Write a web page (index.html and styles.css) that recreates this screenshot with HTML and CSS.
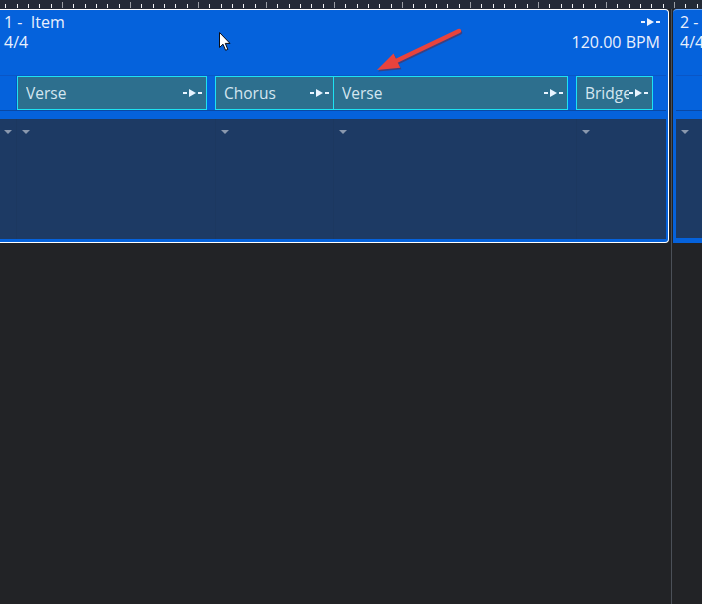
FILE: index.html
```html
<!DOCTYPE html>
<html>
<head>
<meta charset="utf-8">
<link rel="stylesheet" href="styles.css">
</head>
<body>
<div class="ruler"></div>
<div class="lane">
  <div class="item item-selected">
    <div class="head">
      <div class="row">
        <span>1 -&nbsp; Item</span>
        <svg class="play" width="19" height="8" viewBox="0 0 19 8"><rect x="0" y="3" width="4" height="2"/><polygon points="6,0 13,4 6,8"/><rect x="15" y="3" width="4" height="2"/></svg>
      </div>
      <div class="row"><span>4/4</span><span>120.00 BPM</span></div>
    </div>
    <div class="markers">
      <div class="sec s0"></div>
      <div class="sec s1"><div class="mk w190"><span class="mk-name">Verse</span><svg class="play" width="19" height="8" viewBox="0 0 19 8"><rect x="0" y="3" width="4" height="2"/><polygon points="6,0 13,4 6,8"/><rect x="15" y="3" width="4" height="2"/></svg></div></div>
      <div class="sec s2"><div class="mk w118"><span class="mk-name">Chorus</span><svg class="play" width="19" height="8" viewBox="0 0 19 8"><rect x="0" y="3" width="4" height="2"/><polygon points="6,0 13,4 6,8"/><rect x="15" y="3" width="4" height="2"/></svg></div></div>
      <div class="sec s3"><div class="mk w235"><span class="mk-name">Verse</span><svg class="play" width="19" height="8" viewBox="0 0 19 8"><rect x="0" y="3" width="4" height="2"/><polygon points="6,0 13,4 6,8"/><rect x="15" y="3" width="4" height="2"/></svg></div></div>
      <div class="sec s4"><div class="mk w77"><span class="mk-name">Bridge</span><svg class="play" width="19" height="8" viewBox="0 0 19 8"><rect x="0" y="3" width="4" height="2"/><polygon points="6,0 13,4 6,8"/><rect x="15" y="3" width="4" height="2"/></svg></div></div>
    </div>
    <div class="strip"></div>
    <div class="tracks">
      <div class="col s0"><i class="tri"></i></div>
      <div class="col s1 sep"><i class="tri"></i></div>
      <div class="col s2 sep"><i class="tri"></i></div>
      <div class="col s3 sep"><i class="tri"></i></div>
      <div class="col s4 sep"><i class="tri"></i></div>
    </div>
  </div>
  <div class="divider"></div>
  <div class="item item-next">
    <div class="head">
      <div class="row"><span>2 -</span></div>
      <div class="row"><span>4/4</span></div>
    </div>
    <div class="markers"></div>
    <div class="strip"></div>
    <div class="tracks">
      <div class="col"><i class="tri"></i></div>
    </div>
  </div>
</div>

<svg class="annot-arrow" width="702" height="604" viewBox="0 0 702 604">
  <g transform="translate(1,1.5)" fill="#7a1a18" opacity="0.45">
    <line x1="459" y1="31" x2="394" y2="62" stroke="#7a1a18" stroke-width="4.5" stroke-linecap="round"/>
    <polygon points="377,70 393.5,53.4 400.3,67.8"/>
  </g>
  <line x1="459" y1="31" x2="394" y2="62" stroke="#e8433d" stroke-width="4.5" stroke-linecap="round"/>
  <polygon points="377,70 393.5,53.4 400.3,67.8" fill="#e8433d"/>
</svg>

<svg class="cursor" width="13" height="20" viewBox="0 0 13 20">
  <path d="M0.5,0.5 L0.5,15.5 L4,12.2 L6.6,18.3 L8.8,17.4 L6.3,11.4 L11,11.4 Z" fill="#ffffff" stroke="#0b0b12" stroke-width="1"/>
</svg>
</body>
</html>
```

FILE: styles.css
```css
html, body {
  margin: 0;
  padding: 0;
}
body {
  width: 702px;
  height: 604px;
  overflow: hidden;
  background: #222326;
  font-family: "Open Sans", "Noto Sans", sans-serif;
  position: relative;
}
.ruler {
  height: 9px;
  background-color: #232a37;
  background-image:
    linear-gradient(90deg, #9a9ea5 0 1px, transparent 1px 68px),
    linear-gradient(90deg,
      transparent 0 11px, #f2f3f5 11px 12px,
      transparent 12px 23px, #f2f3f5 23px 24px,
      transparent 24px 34px, #f2f3f5 34px 35px,
      transparent 35px 45px, #f2f3f5 45px 46px,
      transparent 46px 57px, #f2f3f5 57px 58px,
      transparent 58px 68px);
  background-size: 68px 6px, 68px 4px;
  background-position: 62px 2px, 62px 4px;
  background-repeat: repeat-x;
}
.lane {
  display: flex;
  align-items: flex-start;
  height: 595px;
}
.item {
  box-sizing: border-box;
  height: 234px;
  background: #0562dc;
  display: flex;
  flex-direction: column;
  flex: none;
}
.item-selected {
  margin-left: -8px;
  width: 677px;
  border: 1px solid #ffffff;
  border-left: none;
  border-radius: 0 4px 4px 0;
  padding-right: 2px;
}
.item-next {
  width: 40px;
  border-top: 1px solid #6ea6f2;
  border-radius: 4px 0 0 0;
  padding-left: 3px;
  padding-bottom: 1px;
}
.divider {
  flex: none;
  width: 1px;
  align-self: stretch;
  background: #4b5058;
  margin: 0 1px 0 2px;
}
.head {
  height: 65px;
  box-sizing: border-box;
  padding: 2px 6px 0 12px;
  color: #eaf0fc;
  font-size: 16px;
}
.item-next .head {
  padding-left: 4px;
}
.row {
  height: 20px;
  line-height: 20px;
  display: flex;
  justify-content: space-between;
  align-items: center;
  white-space: nowrap;
}
.play {
  fill: currentColor;
  flex: none;
}
.markers {
  box-sizing: border-box;
  height: 36px;
  border-top: 1px solid #0a56c6;
  border-bottom: 1px solid #0a48a4;
  display: flex;
}
.sec {
  flex: none;
  height: 34px;
  box-sizing: border-box;
}
.s0 { width: 24px; }
.s1 { width: 199px; }
.s2 { width: 118px; }
.s3 { width: 243px; }
.s4 { width: 90px; }
.markers .s1 { border-left: 1px solid #0a52bc; }
.mk {
  box-sizing: border-box;
  height: 34px;
  border: 1px solid #1de2f3;
  background: #2d6f8e;
  display: flex;
  align-items: center;
  padding: 0 4px 0 8px;
  color: #d4e6f0;
  font-size: 15.5px;
}
.w190 { width: 190px; }
.w118 { width: 119px; }
.w235 { width: 235px; }
.w77 { width: 77px; }
.mk-name {
  flex: 1;
  min-width: 0;
  overflow: hidden;
  white-space: nowrap;
}
.mk .play {
  color: #e8f4ff;
}
.strip {
  height: 8px;
  flex: none;
}
.tracks {
  flex: 1;
  background: #1d3a64;
  display: flex;
  margin-bottom: 3px;
}
.item-next .tracks {
  margin-bottom: 4px;
}
.col {
  flex: none;
  box-sizing: border-box;
  padding: 11px 0 0 5px;
}
.tracks .s0 { padding-left: 12px; }
.sep {
  border-left: 1px solid #1c3860;
}
.tri {
  display: block;
  width: 0;
  height: 0;
  border-left: 4px solid transparent;
  border-right: 4px solid transparent;
  border-top: 4px solid #8a98ae;
}
.annot-arrow {
  position: absolute;
  left: 0;
  top: 0;
  pointer-events: none;
}
.cursor {
  position: absolute;
  left: 219px;
  top: 32px;
}
```
